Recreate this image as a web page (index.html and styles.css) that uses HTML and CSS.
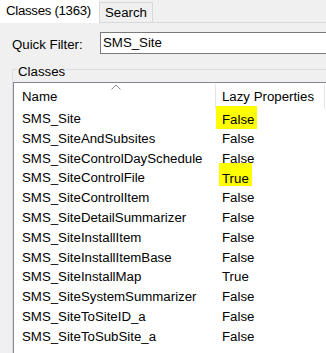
FILE: index.html
```html
<!DOCTYPE html>
<html>
<head>
<meta charset="utf-8">
<link rel="stylesheet" href="styles.css">
</head>
<body>
<div class="window">
  <div class="tabs">
    <div class="tab tab-active">Classes (1363)</div>
    <div class="tab tab-search">Search</div>
    <div class="tab-fill"></div>
  </div>
  <div class="page">
    <div class="filter">
      <div class="filter-label">Quick Filter:</div>
      <div class="textbox">SMS_Site</div>
    </div>
    <fieldset class="group">
      <legend class="group-title">Classes</legend>
      <div class="list">
        <div class="list-head">
          <div class="hcell hcell-name">
            <svg class="sort" width="10" height="6" viewBox="0 0 10 6"><polyline points="0.5,5.5 5,1 9.5,5.5" fill="none" stroke="#8c8c8c" stroke-width="1"/></svg>
            <span class="htext">Name</span>
          </div>
          <div class="hcell hcell-lazy">Lazy Properties</div>
          <div class="hcell-rest"></div>
        </div>
        <div class="row"><div class="cell-name">SMS_Site</div><div class="cell-val"><span class="hl hl-a">False</span></div></div>
        <div class="row"><div class="cell-name">SMS_SiteAndSubsites</div><div class="cell-val">False</div></div>
        <div class="row"><div class="cell-name">SMS_SiteControlDaySchedule</div><div class="cell-val">False</div></div>
        <div class="row"><div class="cell-name">SMS_SiteControlFile</div><div class="cell-val"><span class="hl hl-b">True</span></div></div>
        <div class="row"><div class="cell-name">SMS_SiteControlItem</div><div class="cell-val">False</div></div>
        <div class="row"><div class="cell-name">SMS_SiteDetailSummarizer</div><div class="cell-val">False</div></div>
        <div class="row"><div class="cell-name">SMS_SiteInstallItem</div><div class="cell-val">False</div></div>
        <div class="row"><div class="cell-name">SMS_SiteInstallItemBase</div><div class="cell-val">False</div></div>
        <div class="row"><div class="cell-name">SMS_SiteInstallMap</div><div class="cell-val">True</div></div>
        <div class="row"><div class="cell-name">SMS_SiteSystemSummarizer</div><div class="cell-val">False</div></div>
        <div class="row"><div class="cell-name">SMS_SiteToSiteID_a</div><div class="cell-val">False</div></div>
        <div class="row"><div class="cell-name">SMS_SiteToSubSite_a</div><div class="cell-val">False</div></div>
      </div>
    </fieldset>
  </div>
</div>
</body>
</html>
```
FILE: styles.css
```css
html, body {
  margin: 0;
  background: #f0f0f0;
  overflow: hidden;
}
body {
  font-family: "Liberation Sans", Arial, sans-serif;
  font-size: 13.25px;
  color: #000;
}
.window {
  width: 326px;
  height: 353px;
  overflow: hidden;
}
.tabs {
  display: flex;
  height: 23px;
}
.tab {
  box-sizing: border-box;
  line-height: 15px;
  white-space: nowrap;
}
.tab-active {
  width: 99px;
  background: #fff;
  padding: 3px 0 0 6px;
  letter-spacing: -0.3px;
}
.tab-search {
  width: 54px;
  height: 21px;
  margin-top: 2px;
  border: 1px solid #d9d9d9;
  background: #f0f0f0;
  padding: 2px 0 0 5px;
}
.tab-fill {
  flex: 1;
  border-bottom: 1px solid #d9d9d9;
}
.page {
  padding-left: 12px;
}
.filter {
  display: flex;
  margin-top: 9px;
  height: 22px;
}
.filter-label {
  width: 88px;
  padding-top: 5px;
  line-height: 15px;
}
.textbox {
  flex: 1;
  height: 22px;
  box-sizing: border-box;
  border: 1px solid #7a7a7a;
  border-right: none;
  background: #fff;
  padding: 1.5px 0 0 2px;
  line-height: 15px;
}
.group {
  margin: 7px 0 0 0;
  padding: 0;
  border: 1px solid #dcdcdc;
  border-right: none;
  border-bottom: none;
  min-width: 0;
}
.group-title {
  margin-left: 4px;
  padding: 4px 1px 0;
  line-height: 13px;
}
.list {
  margin-top: 4px;
  border-top: 1px solid #828790;
  border-left: 1px solid #828790;
  background: #fff;
  height: 270px;
}
.list-head {
  display: grid;
  grid-template-columns: 202px 109px 1fr;
  height: 26px;
}
.hcell {
  border-right: 1px solid #e5e5e5;
  margin-top: 1px;
}
.hcell-name {
  display: flex;
  flex-direction: column;
  padding-left: 8px;
}
.sort {
  display: block;
  align-self: center;
  margin: 0 6px -1.5px 0;
}
.htext {
  line-height: 15px;
}
.hcell-lazy {
  padding: 4.5px 0 0 6px;
  line-height: 15px;
  white-space: nowrap;
}
.row {
  display: grid;
  grid-template-columns: 202px 109px 1fr;
  height: 19.8px;
  line-height: 19.8px;
  white-space: nowrap;
}
.cell-name {
  padding-left: 8px;
}
.cell-val {
  padding-left: 6px;
}
.hl {
  background: #ffff00;
}
.hl-a {
  padding: 5.5px 2.7px 2.7px 6px;
  margin: 0 -2.7px 0 -6px;
}
.hl-b {
  padding: 7.9px 3px 0.3px 3px;
  margin: 0 -3px 0 -3px;
}
```
